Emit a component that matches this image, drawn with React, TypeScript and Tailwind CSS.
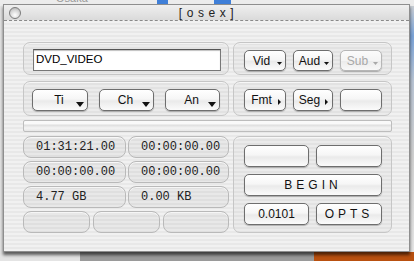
import React from "react";

const sans = "font-['Liberation_Sans',Arial,sans-serif]";
const mono = "font-['Liberation_Mono','Courier_New',monospace]";

const btnBase =
  "relative flex items-center justify-center rounded-[5px] border shadow-[0_1px_1px_rgba(0,0,0,0.25)]";
const btnOn =
  "border-[#6e6e6e] bg-[linear-gradient(#ffffff_0%,#f6f6f6_45%,#eaeaea_55%,#fbfbfb_100%)] text-[#111]";
const btnOff =
  "border-[#b6b6b6] bg-[linear-gradient(#fbfbfb_0%,#f4f4f4_50%,#ececec_55%,#f8f8f8_100%)] text-[#a8a8a8]";

type Arrow = "down" | "small" | "right" | "none";

function Btn({
  label,
  w,
  h = 22,
  arrow = "none",
  disabled,
  tracking,
}: {
  label?: string;
  w: number;
  h?: number;
  arrow?: Arrow;
  disabled?: boolean;
  tracking?: string;
}) {
  const fill = disabled ? "#a8a8a8" : "#111";
  const pad = arrow === "down" ? "pr-[2px]" : arrow === "none" ? "" : "pr-[7px]";
  return (
    <div className={`${btnBase} ${disabled ? btnOff : btnOn}`} style={{ width: w, height: h }}>
      {label && (
        <span className={`${sans} text-[12px] leading-none ${tracking ?? ""} ${pad}`}>
          {label}
        </span>
      )}
      {arrow === "down" && (
        <svg className="absolute right-[3px] bottom-[3px]" width="8" height="5" viewBox="0 0 8 5">
          <polygon points="0,0 8,0 4,5" fill={fill} />
        </svg>
      )}
      {arrow === "small" && (
        <svg className="absolute right-[3px] bottom-[5px]" width="5" height="3" viewBox="0 0 5 3">
          <polygon points="0,0 5,0 2.5,3" fill={fill} />
        </svg>
      )}
      {arrow === "right" && (
        <svg className="absolute right-[4px] bottom-[5px]" width="3" height="6" viewBox="0 0 3 6">
          <polygon points="0,0 3,3 0,6" fill={fill} />
        </svg>
      )}
    </div>
  );
}

function Field({ text, w }: { text?: string; w: number }) {
  return (
    <div
      className="flex h-[22px] items-center rounded-[8px] border border-[#b9b9b9] bg-black/[0.035] pl-[12px] shadow-[inset_0_1px_0_rgba(255,255,255,0.7)]"
      style={{ width: w }}
    >
      {text && <span className={`${mono} text-[12px] leading-none text-[#222]`}>{text}</span>}
    </div>
  );
}

const group = "rounded-[7px] border border-[#c6c6c6] bg-black/[0.025] shadow-[inset_0_1px_0_rgba(255,255,255,0.6)]";

export default function App() {
  return (
    <div className="relative h-[261px] w-[414px] overflow-hidden bg-[#e4e4e4]">
      {/* desktop behind the window */}
      <div className="absolute left-0 top-0 h-[6px] w-full bg-[#ececec]" />
      <span className={`${sans} absolute left-[56px] top-[-8px] text-[11px] leading-[12px] text-[#999]`}>Osaka</span>
      <div className="absolute left-[157px] top-0 h-[4px] w-[11px] bg-[#3f7fd8]" />
      <div className="absolute left-[214px] top-0 h-[4px] w-[17px] bg-[#3f7fd8]" />
      <div className="absolute right-0 top-[6px] h-[250px] w-[6px] bg-[linear-gradient(#c8cdd4_0%,#7aa3d8_12%,#b8c4d4_30%,#d0d0d0_60%,#e6e6e6_100%)]" />
      <div className="absolute bottom-0 left-[80px] h-[9px] w-[240px] bg-[#9a9a9a]" />
      <div className="absolute bottom-0 left-[314px] h-[9px] w-[100px] bg-[#b9500f]" />

      <div className="relative pl-[3px] pt-[4px]">
        <div className="flex h-[248px] w-[407px] flex-col border border-[#8e8e8e] shadow-[0_3px_3px_rgba(0,0,0,0.6)]">
          {/* title bar */}
          <div className="relative flex h-[16px] items-center justify-center border-b border-dashed border-[#8a8a8a] bg-[linear-gradient(#efefef,#dadada)]">
            <div className="absolute left-[5px] top-[2px] h-[12px] w-[12px] rounded-full border border-[#7c7c7c] bg-[radial-gradient(circle_at_50%_70%,#ffffff_0%,#d6d6d6_55%,#a8a8a8_100%)]" />
            <span className={`${sans} text-[12px] leading-none tracking-[0.6px] text-[#222]`}>[ o s e x ]</span>
          </div>

          {/* body */}
          <div className="flex flex-1 flex-col bg-[repeating-linear-gradient(#f1f1f1_0px,#f1f1f1_2px,#e8e8e8_2px,#e8e8e8_4px)] pl-[19px] pt-[21px]">
            {/* row 1 */}
            <div className="flex gap-[4px]">
              <div className={`${group} h-[33px] w-[206px] pl-[9px] pt-[6px]`}>
                <div className="flex h-[22px] w-[188px] items-center border border-[#777] border-t-[#555] bg-white pl-[2px] shadow-[inset_0_1px_1px_rgba(0,0,0,0.25)]">
                  <span className={`${sans} text-[11.5px] leading-none text-black`}>DVD_VIDEO</span>
                </div>
              </div>
              <div className={`${group} flex h-[33px] w-[159px] gap-[7px] pl-[10px] pt-[7px]`}>
                <Btn label="Vid" w={42} h={21} arrow="small" />
                <Btn label="Aud" w={40} h={21} arrow="small" />
                <Btn label="Sub" w={42} h={21} arrow="small" disabled />
              </div>
            </div>

            {/* row 2 */}
            <div className="mt-[6px] flex gap-[4px]">
              <div className={`${group} flex h-[35px] w-[206px] gap-[11px] pl-[8px] pt-[7px]`}>
                <Btn label="Ti" w={56} arrow="down" />
                <Btn label="Ch" w={55} arrow="down" />
                <Btn label="An" w={55} arrow="down" />
              </div>
              <div className={`${group} flex h-[35px] w-[159px] gap-[7px] pl-[10px] pt-[7px]`}>
                <Btn label="Fmt" w={42} arrow="right" />
                <Btn label="Seg" w={40} arrow="right" />
                <Btn w={42} />
              </div>
            </div>

            {/* separator track */}
            <div className="mt-[4px] h-[12px] w-[369px] rounded-[2px] border border-[#bdbdbd] bg-[linear-gradient(#fafafa_0%,#fafafa_30%,#dedede_40%,#f4f4f4_70%,#e6e6e6_100%)]" />

            {/* bottom */}
            <div className="mt-[4px] flex gap-[4px]">
              <div className="flex w-[206px] flex-col gap-[3px]">
                <div className="flex gap-[2px]">
                  <Field text="01:31:21.00" w={103} />
                  <Field text="00:00:00.00" w={101} />
                </div>
                <div className="flex gap-[2px]">
                  <Field text="00:00:00.00" w={103} />
                  <Field text="00:00:00.00" w={101} />
                </div>
                <div className="flex gap-[2px]">
                  <Field text="4.77 GB" w={103} />
                  <Field text="0.00 KB" w={101} />
                </div>
                <div className="flex gap-[3px]">
                  <Field w={67} />
                  <Field w={67} />
                  <Field w={66} />
                </div>
              </div>
              <div className={`${group} flex h-[97px] w-[159px] flex-col gap-[7px] pl-[10px] pt-[8px]`}>
                <div className="flex gap-[7px]">
                  <Btn w={65} />
                  <Btn w={66} />
                </div>
                <Btn label="BEGIN" w={138} tracking="tracking-[4px] text-[11px]" />
                <div className="flex gap-[7px]">
                  <Btn label="0.0101" w={65} />
                  <Btn label="OPTS" w={66} tracking="tracking-[4px] text-[11px]" />
                </div>
              </div>
            </div>
          </div>
        </div>
      </div>
    </div>
  );
}
